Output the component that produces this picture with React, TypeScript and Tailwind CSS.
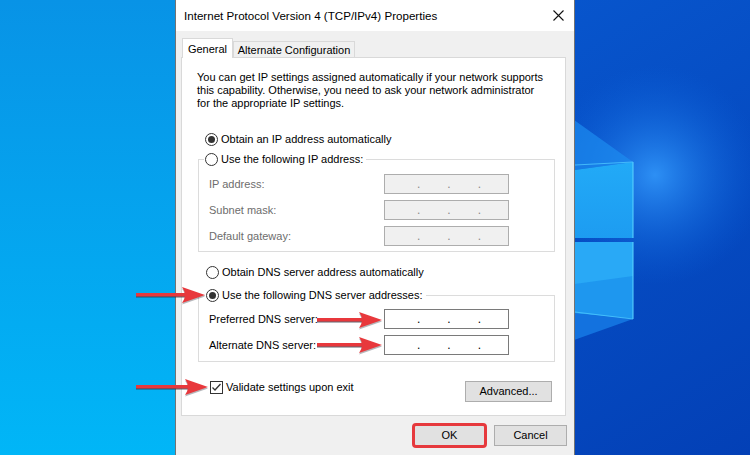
import React from "react";

function Radio({ checked }: { checked?: boolean }) {
  return (
    <span className="flex h-[13px] w-[13px] shrink-0 items-center justify-center rounded-full border border-[#333333] bg-white">
      {checked && <span className="h-[7px] w-[7px] rounded-full bg-[#333333]" />}
    </span>
  );
}

function IpBox({ disabled }: { disabled?: boolean }) {
  return (
    <div
      className={
        disabled
          ? "h-[20px] w-[125px] border border-[#adadad] bg-[#f0f0f0] text-[#8a8a8a]"
          : "h-[20px] w-[125px] border border-[#7a7a7a] bg-white text-black"
      }
    >
      <div className="flex h-full items-center gap-[27px] pl-[32px] text-[12px] leading-none">
        <span>.</span>
        <span>.</span>
        <span>.</span>
      </div>
    </div>
  );
}

function Row({ label, disabled }: { label: string; disabled?: boolean }) {
  return (
    <div className="flex h-[20px] items-center">
      <span className={disabled ? "w-[175px] text-[#6d6d6d]" : "w-[175px] text-black"}>{label}</span>
      <IpBox disabled={disabled} />
    </div>
  );
}

function Arrow({ x0, x1, y }: { x0: number; x1: number; y: number }) {
  const head = `M ${x1} ${y} L ${x1 - 23} ${y - 8} Q ${x1 - 17} ${y} ${x1 - 23} ${y + 8} Z`;
  const headS = `M ${x1} ${y + 1.5} L ${x1 - 23} ${y - 6.5} Q ${x1 - 17} ${y + 1.5} ${x1 - 23} ${y + 9.5} Z`;
  return (
    <g>
      <rect x={x0} y={y - 0.5} width={x1 - 19 - x0} height={3} fill="#2f3440" opacity={0.75} />
      <path d={headS} fill="#2f3440" opacity={0.35} />
      <rect x={x0} y={y - 2} width={x1 - 19 - x0} height={3.5} fill="#e8383c" />
      <path d={head} fill="#e8383c" />
    </g>
  );
}

function Wallpaper() {
  return (
    <svg className="absolute inset-0" width={750} height={455} viewBox="0 0 750 455">
      <defs>
        <linearGradient id="lg" x1="0" y1="0" x2="0" y2="1">
          <stop offset="0" stopColor="#0893e6" />
          <stop offset="1" stopColor="#01b6f7" />
        </linearGradient>
        <linearGradient id="rg" x1="0" y1="0" x2="1" y2="1">
          <stop offset="0" stopColor="#0a62da" />
          <stop offset="1" stopColor="#0340b6" />
        </linearGradient>
        <radialGradient id="glow" cx="655" cy="175" r="110" gradientUnits="userSpaceOnUse">
          <stop offset="0" stopColor="#2f93f7" stopOpacity="0.95" />
          <stop offset="1" stopColor="#0a5fd9" stopOpacity="0" />
        </radialGradient>
        <linearGradient id="pane" x1="0" y1="0" x2="0" y2="1">
          <stop offset="0" stopColor="#22aaf7" />
          <stop offset="1" stopColor="#1d9cf1" />
        </linearGradient>
      </defs>
      <rect x="0" y="0" width="750" height="455" fill="url(#rg)" />
      <rect x="0" y="0" width="750" height="455" fill="url(#glow)" />
      <rect x="0" y="0" width="180" height="455" fill="url(#lg)" />
      <polygon points="560,110 633,162 560,172" fill="#1c8cf0" opacity="0.7" />
      <polygon points="560,172 633,162 633,238 560,238" fill="url(#pane)" />
      <polygon points="560,242 633,242 633,319 560,312" fill="#1e97ef" />
      <polygon points="560,242 633,242 633,276 560,286" fill="#29a9f6" />
      <polygon points="560,312 633,319 560,345" fill="#1a84ec" opacity="0.7" />
      <line x1="633" y1="162" x2="633" y2="238" stroke="#5cd5ff" strokeWidth="1" />
      <line x1="633" y1="242" x2="633" y2="319" stroke="#5cd5ff" strokeWidth="1" />
      <line x1="575" y1="165" x2="633" y2="162" stroke="#4cc8ff" strokeWidth="0.8" />
      <line x1="575" y1="312" x2="633" y2="319" stroke="#4cc8ff" strokeWidth="0.8" />
    </svg>
  );
}

export default function App() {
  return (
    <div className="relative h-[455px] w-[750px] overflow-hidden whitespace-nowrap font-['Liberation_Sans',Arial,sans-serif] text-[11px] text-black">
      <Wallpaper />
      <div className="absolute left-[175px] top-0 flex h-[470px] w-[400px] flex-col border-x border-[#737373] bg-[#f0f0f0]">
        <div className="flex h-[31px] shrink-0 items-center justify-between bg-white pl-[8px] pr-[10px]">
          <span className="text-[11.6px] leading-none">Internet Protocol Version 4 (TCP/IPv4) Properties</span>
          <svg width="11" height="11" viewBox="0 0 11 11">
            <path d="M0.5 0.5 L10.5 10.5 M10.5 0.5 L0.5 10.5" stroke="#111" strokeWidth="1.1" />
          </svg>
        </div>
        <div className="flex flex-col pl-[5px] pr-[8px] pt-[7px]">
          <div className="relative z-10 -mb-[1px] flex h-[20px] items-end pl-[1px]">
            <div className="flex h-[20px] w-[51px] justify-center border border-b-0 border-[#d9d9d9] bg-white pt-[3px] leading-[14px]">
              General
            </div>
            <div className="mb-[1px] flex h-[16px] w-[122px] justify-center border border-b-0 border-[#d9d9d9] bg-[#f0f0f0] pt-[1px] leading-[14px]">
              Alternate Configuration
            </div>
          </div>
          <div className="flex h-[359px] w-[385px] flex-col border border-[#d9d9d9] bg-white">
            <p className="ml-[15px] mt-[13px] leading-[13px]">
              You can get IP settings assigned automatically if your network supports
              <br />
              this capability. Otherwise, you need to ask your network administrator
              <br />
              for the appropriate IP settings.
            </p>
            <div className="ml-[23px] mt-[21px] flex h-[16px] items-center gap-[3px]">
              <Radio checked />
              <span>Obtain an IP address automatically</span>
            </div>
            <div className="ml-[16px] mt-[12px] flex w-[357px] flex-col border border-[#dcdcdc]">
              <div className="-mt-[9px] ml-[5px] flex h-[16px] items-center gap-[3px] self-start bg-white pl-[1px] pr-[3px]">
                <Radio />
                <span>Use the following IP address:</span>
              </div>
              <div className="mt-[7px] flex flex-col gap-[6px] pb-[5px] pl-[10px]">
                <Row label="IP address:" disabled />
                <Row label="Subnet mask:" disabled />
                <Row label="Default gateway:" disabled />
              </div>
            </div>
            <div className="ml-[24px] mt-[12px] flex h-[16px] items-center gap-[3px]">
              <Radio />
              <span>Obtain DNS server address automatically</span>
            </div>
            <div className="ml-[16px] mt-[15px] flex w-[357px] flex-col border border-[#dcdcdc]">
              <div className="-mt-[9px] ml-[6px] flex h-[16px] items-center gap-[3px] self-start bg-white pl-[1px] pr-[3px]">
                <Radio checked />
                <span>Use the following DNS server addresses:</span>
              </div>
              <div className="mt-[6px] flex flex-col gap-[6px] pb-[6px] pl-[10px]">
                <Row label="Preferred DNS server:" />
                <Row label="Alternate DNS server:" />
              </div>
            </div>
            <div className="mt-[17px] flex items-start justify-between pl-[28px] pr-[13px]">
              <div className="flex h-[16px] items-center gap-[3px]">
                <span className="flex h-[13px] w-[13px] items-center justify-center border border-[#333333] bg-white">
                  <svg width="11" height="11" viewBox="0 0 11 11">
                    <polyline points="1.5,5.5 4,8 9.5,2" fill="none" stroke="#333" strokeWidth="1.3" />
                  </svg>
                </span>
                <span>Validate settings upon exit</span>
              </div>
              <div className="mt-[2px] flex h-[21px] w-[87px] items-center justify-center border border-[#adadad] bg-[#e1e1e1]">
                Advanced...
              </div>
            </div>
          </div>
          <div className="-mr-[1px] mt-[9px] flex justify-end gap-[8px]">
            <div className="relative flex h-[21px] w-[73px] items-center justify-center border border-[#adadad] bg-[#e1e1e1]">
              OK
              <span className="absolute -bottom-[3px] -left-[2px] -right-[2px] -top-[3px] rounded-[4px] border-[3px] border-[#e6393d]" />
            </div>
            <div className="flex h-[21px] w-[73px] items-center justify-center border border-[#adadad] bg-[#e1e1e1]">
              Cancel
            </div>
          </div>
        </div>
      </div>
      <svg className="pointer-events-none absolute inset-0" width={750} height={455} viewBox="0 0 750 455">
        <Arrow x0={136} x1={205} y={295} />
        <Arrow x0={317} x1={382} y={320} />
        <Arrow x0={317} x1={382} y={345} />
        <Arrow x0={136} x1={208} y={387} />
      </svg>
    </div>
  );
}
